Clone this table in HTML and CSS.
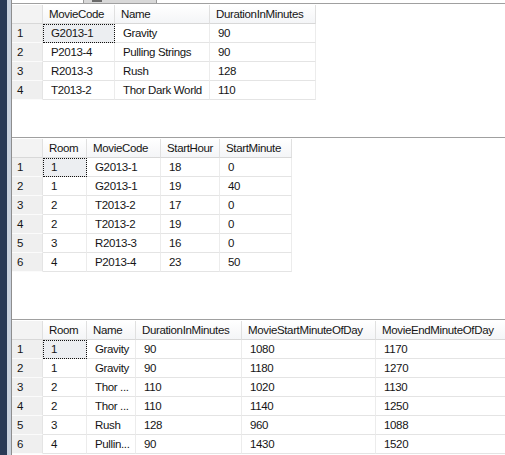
FILE: index.html
```html
<!DOCTYPE html>
<html>
<head>
<meta charset="utf-8">
<link rel="stylesheet" href="styles.css">
</head>
<body>
<div class="frame">
  <div class="rail"></div>
  <div class="gutter"></div>
  <div class="main">
    <div class="topbar"><div class="tab"><span class="tab-icon"></span></div></div>
    <section class="panel p1">
      <div class="grid g1">
        <div class="hc corner"></div><div class="hc">MovieCode</div><div class="hc">Name</div><div class="hc">DurationInMinutes</div>
        <div class="rh">1</div><div class="c sel">G2013-1</div><div class="c">Gravity</div><div class="c">90</div>
        <div class="rh">2</div><div class="c">P2013-4</div><div class="c">Pulling Strings</div><div class="c">90</div>
        <div class="rh">3</div><div class="c">R2013-3</div><div class="c">Rush</div><div class="c">128</div>
        <div class="rh">4</div><div class="c">T2013-2</div><div class="c">Thor Dark World</div><div class="c">110</div>
      </div>
    </section>
    <section class="panel p2">
      <div class="grid g2">
        <div class="hc corner"></div><div class="hc">Room</div><div class="hc">MovieCode</div><div class="hc">StartHour</div><div class="hc">StartMinute</div>
        <div class="rh">1</div><div class="c sel">1</div><div class="c">G2013-1</div><div class="c">18</div><div class="c">0</div>
        <div class="rh">2</div><div class="c">1</div><div class="c">G2013-1</div><div class="c">19</div><div class="c">40</div>
        <div class="rh">3</div><div class="c">2</div><div class="c">T2013-2</div><div class="c">17</div><div class="c">0</div>
        <div class="rh">4</div><div class="c">2</div><div class="c">T2013-2</div><div class="c">19</div><div class="c">0</div>
        <div class="rh">5</div><div class="c">3</div><div class="c">R2013-3</div><div class="c">16</div><div class="c">0</div>
        <div class="rh">6</div><div class="c">4</div><div class="c">P2013-4</div><div class="c">23</div><div class="c">50</div>
      </div>
    </section>
    <section class="panel p3">
      <div class="grid g3">
        <div class="hc corner"></div><div class="hc">Room</div><div class="hc">Name</div><div class="hc">DurationInMinutes</div><div class="hc">MovieStartMinuteOfDay</div><div class="hc">MovieEndMinuteOfDay</div>
        <div class="rh">1</div><div class="c sel">1</div><div class="c">Gravity</div><div class="c">90</div><div class="c">1080</div><div class="c">1170</div>
        <div class="rh">2</div><div class="c">1</div><div class="c">Gravity</div><div class="c">90</div><div class="c">1180</div><div class="c">1270</div>
        <div class="rh">3</div><div class="c">2</div><div class="c">Thor ...</div><div class="c">110</div><div class="c">1020</div><div class="c">1130</div>
        <div class="rh">4</div><div class="c">2</div><div class="c">Thor ...</div><div class="c">110</div><div class="c">1140</div><div class="c">1250</div>
        <div class="rh">5</div><div class="c">3</div><div class="c">Rush</div><div class="c">128</div><div class="c">960</div><div class="c">1088</div>
        <div class="rh">6</div><div class="c">4</div><div class="c">Pullin...</div><div class="c">90</div><div class="c">1430</div><div class="c">1520</div>
      </div>
    </section>
  </div>
</div>
</body>
</html>
```
FILE: styles.css
```css
html, body {
  margin: 0;
  padding: 0;
  background: #ffffff;
}
.frame {
  display: flex;
  width: 505px;
  height: 455px;
  overflow: hidden;
  font-family: "Liberation Sans", Arial, sans-serif;
  font-size: 11.5px;
  letter-spacing: -0.35px;
  color: #151515;
}
.rail {
  width: 7px;
  flex: none;
  background: #293955;
}
.gutter {
  width: 4px;
  flex: none;
  background: #c9d1dd;
}
.main {
  flex: 1;
  display: flex;
  flex-direction: column;
  border-left: 1px solid #8e8e8e;
  min-width: 0;
}
.topbar {
  height: 3px;
  flex: none;
  background: #ffffff;
}
.tab {
  margin-left: 71px;
  width: 74px;
  height: 3px;
  background: #d8d8d8;
  box-sizing: border-box;
  border-left: 1px solid #9a9a9a;
  border-right: 1px solid #9a9a9a;
  display: flex;
  padding-left: 8px;
}
.tab-icon {
  width: 10px;
  height: 2px;
  background: #6a6a6a;
}
.panel {
  border-top: 1px solid #a0a0a0;
  padding-top: 1px;
  flex: none;
  box-sizing: border-box;
}
.p1 { height: 134px; }
.p2 { height: 182px; }
.p3 { flex: 1; }
.grid {
  display: grid;
  grid-auto-rows: 19px;
  width: max-content;
}
.g1 { grid-template-columns: 31px 72px 95px 106px; }
.g2 { grid-template-columns: 31px 44px 74px 59px 72px; }
.g3 { grid-template-columns: 31px 44px 49px 106px 134px 150px; }
.hc, .rh, .c {
  box-sizing: border-box;
  white-space: nowrap;
  overflow: hidden;
  line-height: 18px;
}
.hc {
  background: linear-gradient(#ffffff, #f4f5f7);
  border-right: 1px solid #e0e0e0;
  border-bottom: 1px solid #d8d8d8;
  padding-left: 6px;
  line-height: 19px;
}
.corner {
  background: #f3f3f3;
}
.rh {
  background: #efefef;
  border-bottom: 1px solid #fbfbfb;
  border-right: 1px solid #e4e4e4;
  padding-left: 5px;
}
.c {
  border-right: 1px solid #ececec;
  border-bottom: 1px solid #e4e4e4;
  padding-left: 8px;
}
.sel {
  background: #eceef1;
  outline: 1px dotted #111111;
  outline-offset: -1px;
}
```
